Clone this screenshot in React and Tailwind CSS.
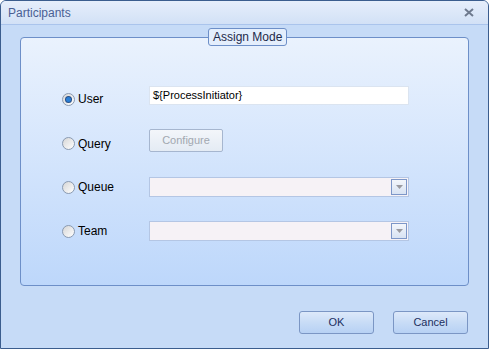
import React from "react";

function Radio({ checked }) {
  return (
    <span className="relative inline-block w-[13px] h-[13px] rounded-full border border-[#8a9ab0] bg-gradient-to-br from-[#d6d6d6] to-[#ffffff] shrink-0">
      {checked && (
        <span className="absolute left-[3px] top-[3px] w-[5px] h-[5px] rounded-full bg-[#2a7fd6] shadow-[0_0_0_1px_#2a4f86]" />
      )}
    </span>
  );
}

function Combo() {
  return (
    <div className="w-[260px] h-[20px] border border-[#b4c6e4] bg-[#f6f2f6] flex justify-end items-center pr-[1px]">
      <div className="w-[16px] h-[16px] border border-[#7c96c8] bg-gradient-to-b from-[#f3f6fb] to-[#d8e3f3] flex items-center justify-center">
        <svg width="7" height="4" viewBox="0 0 7 4">
          <path d="M0 0h7L3.5 4z" fill="#9a9aa0" />
        </svg>
      </div>
    </div>
  );
}

function Row({ label, checked, children, className, labelClass }) {
  return (
    <div className={"flex items-center " + className}>
      <div className={"w-[128px] shrink-0 flex items-center gap-[3px] pl-[41px] " + (labelClass || "")}>
        <Radio checked={checked} />
        <span className="text-[12px] text-black">{label}</span>
      </div>
      {children}
    </div>
  );
}

export default function App() {
  return (
    <div
      className="w-[489px] h-[349px] flex flex-col bg-[#c6dbf7] border border-[#3b5d8e] rounded-t-[6px] overflow-hidden"
      style={{ fontFamily: "'Liberation Sans', Arial, sans-serif" }}
    >
      {/* title bar */}
      <div className="h-[24px] shrink-0 flex items-center justify-between px-[7px] bg-gradient-to-b from-[#e6eefb] to-[#d2e1f6] border-b border-[#aac4ec]">
        <span className="text-[12px] text-[#4a5f94]">Participants</span>
        <svg width="10" height="9" viewBox="0 0 10 9" className="mr-[7px]">
          <path d="M1 1l8 7M9 1L1 8" stroke="#6e7a8e" strokeWidth="2" />
        </svg>
      </div>

      {/* body */}
      <div className="flex-1 flex flex-col px-[19px] pt-[12px]">
        <div className="relative h-[249px] border border-[#6d8fc8] rounded-[4px] bg-gradient-to-b from-[#eaf2fd] to-[#bdd7fb]">
          <div className="absolute left-[187px] top-[-10px] h-[18px] px-[4px] flex items-center border border-[#6d8fc8] rounded-[3px] bg-[#e4eefc] text-[12px] text-[#1e2a4a]">
            Assign Mode
          </div>

          <div className="flex flex-col pt-[48px]">
            <Row label="User" checked className="h-[19px]" labelClass="pt-[7px]">
              <div className="w-[260px] h-[19px] bg-white border border-[#dbe4f0] flex items-center px-[3px] text-[11px] text-black">
                {"${ProcessInitiator}"}
              </div>
            </Row>
            <Row label="Query" className="h-[23px] mt-[24px]" labelClass="pt-[6px]">
              <div className="w-[74px] h-[23px] rounded-[2px] border border-[#a6b6cf] bg-gradient-to-b from-[#f3f6fa] to-[#e4ebf4] flex items-center justify-center text-[11px] text-[#a2a8b0]">
                Configure
              </div>
            </Row>
            <Row label="Queue" className="h-[20px] mt-[25px]">
              <Combo />
            </Row>
            <Row label="Team" className="h-[20px] mt-[24px]">
              <Combo />
            </Row>
          </div>
        </div>

        <div className="flex justify-end gap-[19px] mt-[25px] pr-[1px]">
          <button className="w-[75px] h-[23px] rounded-[3px] border border-[#7b96c4] bg-gradient-to-b from-[#dde9fa] via-[#c8dcf6] to-[#b7d1f4] text-[11px] text-[#1c2f5e]">
            OK
          </button>
          <button className="w-[75px] h-[23px] rounded-[3px] border border-[#7b96c4] bg-gradient-to-b from-[#dde9fa] via-[#c8dcf6] to-[#b7d1f4] text-[11px] text-[#1c2f5e]">
            Cancel
          </button>
        </div>
      </div>
    </div>
  );
}
